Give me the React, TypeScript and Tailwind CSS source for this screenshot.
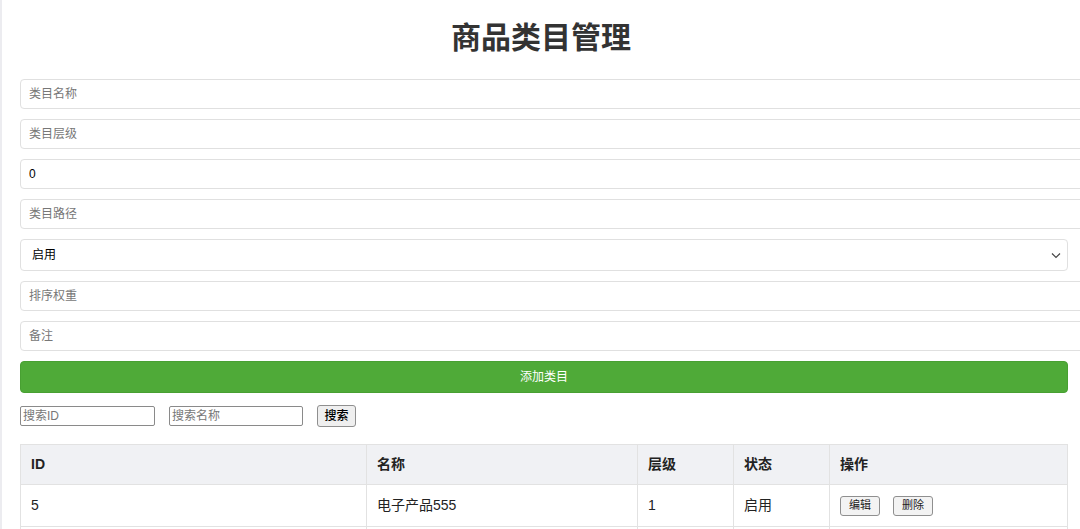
import React from "react";

const font = { fontFamily: '"Liberation Sans", "Noto Sans CJK SC", sans-serif' };

function Field({ placeholder, value }: { placeholder?: string; value?: string }) {
  return (
    <input
      readOnly
      placeholder={placeholder}
      value={value ?? ""}
      className="block w-[1066px] h-[30px] shrink-0 rounded-[4px] border border-[#e0e0e0] bg-white px-[8px] text-[12px] text-black placeholder:text-[#777] outline-none"
      style={font}
    />
  );
}

export default function App() {
  return (
    <div className="min-h-[529px] w-[1080px] overflow-hidden border-l-[2px] border-[#ececf0] bg-white text-[#222]" style={font}>
      <div className="px-[18px] pt-[18px]">
        <h1 className="text-center text-[30px] font-bold leading-[40px] text-[#333]">商品类目管理</h1>
        <div className="mt-[21px] flex flex-col gap-[10px]">
          <Field placeholder="类目名称" />
          <Field placeholder="类目层级" />
          <Field value="0" />
          <Field placeholder="类目路径" />
          <div className="relative flex h-[32px] w-[1048px] items-center rounded-[4px] border border-[#e0e0e0] bg-white pl-[11px] text-[12px] text-black">
            启用
            <svg className="absolute right-[6px] top-[12px]" width="10" height="7" viewBox="0 0 10 7" fill="none">
              <path d="M1 1.5 L5 5.5 L9 1.5" stroke="#444" strokeWidth="1.2" />
            </svg>
          </div>
          <Field placeholder="排序权重" />
          <Field placeholder="备注" />
          <button className="h-[32px] w-[1048px] rounded-[4px] border border-[#48a032] bg-[#4faa38] text-[12px] text-white">添加类目</button>
        </div>
        <div className="mt-[12px] flex items-center">
          <input
            readOnly
            placeholder="搜索ID"
            className="h-[20px] w-[135px] rounded-[2px] border border-[#8a8a8a] px-[2px] text-[12px] placeholder:text-[#777] outline-none"
            style={font}
          />
          <input
            readOnly
            placeholder="搜索名称"
            className="ml-[14px] h-[20px] w-[134px] rounded-[2px] border border-[#8a8a8a] px-[2px] text-[12px] placeholder:text-[#777] outline-none"
            style={font}
          />
          <button className="ml-[14px] flex h-[22px] w-[39px] items-center justify-center rounded-[3px] border border-[#8f8f8f] bg-[#efefef] text-[12px] font-medium text-black">搜索</button>
        </div>
        <table className="mt-[17px] w-[1048px] border-collapse text-[14px]">
          <thead>
            <tr className="h-[40px] bg-[#f0f1f4]">
              <th className="w-[346px] border border-[#e2e2e2] px-[10px] text-left font-bold">ID</th>
              <th className="w-[271px] border border-[#e2e2e2] px-[10px] text-left font-bold">名称</th>
              <th className="w-[96px] border border-[#e2e2e2] px-[10px] text-left font-bold">层级</th>
              <th className="w-[96px] border border-[#e2e2e2] px-[10px] text-left font-bold">状态</th>
              <th className="border border-[#e2e2e2] px-[10px] text-left font-bold">操作</th>
            </tr>
          </thead>
          <tbody>
            <tr className="h-[42px]">
              <td className="border border-[#e2e2e2] px-[10px]">5</td>
              <td className="border border-[#e2e2e2] px-[10px]">电子产品555</td>
              <td className="border border-[#e2e2e2] px-[10px]">1</td>
              <td className="border border-[#e2e2e2] px-[10px]">启用</td>
              <td className="border border-[#e2e2e2] px-[10px]">
                <div className="flex items-center gap-[13px]">
                  <button className="flex h-[20px] w-[40px] items-center justify-center rounded-[3px] border border-[#8f8f8f] bg-[#f3f3f3] text-[11px]">编辑</button>
                  <button className="flex h-[20px] w-[40px] items-center justify-center rounded-[3px] border border-[#8f8f8f] bg-[#f3f3f3] text-[11px]">删除</button>
                </div>
              </td>
            </tr>
            <tr className="h-[42px]">
              <td className="border border-[#e2e2e2] px-[10px]"></td>
              <td className="border border-[#e2e2e2] px-[10px]"></td>
              <td className="border border-[#e2e2e2] px-[10px]"></td>
              <td className="border border-[#e2e2e2] px-[10px]"></td>
              <td className="border border-[#e2e2e2] px-[10px]"></td>
            </tr>
          </tbody>
        </table>
      </div>
    </div>
  );
}
